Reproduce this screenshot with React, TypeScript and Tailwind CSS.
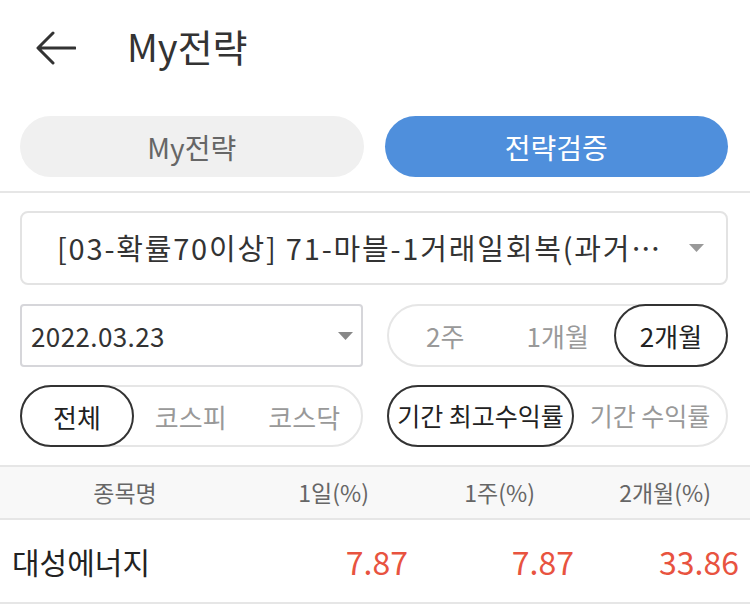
import React from "react";

const F = { fontFamily: '"Noto Sans CJK KR", "Noto Sans", sans-serif' };

function Caret({ color = "#999" }: { color?: string }) {
  return (
    <svg width="15" height="8" viewBox="0 0 15 8">
      <path d="M0 0 L15 0 L7.5 8 Z" fill={color} />
    </svg>
  );
}

export default function App() {
  return (
    <div style={F} className="w-[750px] h-[610px] bg-white overflow-hidden text-[#222]">
      {/* Header */}
      <div className="h-[96px] flex items-center">
        <div className="w-[127px] flex items-center pl-[36px]">
          <svg width="40" height="34" viewBox="0 0 40 34">
            <path d="M39 17 H3 M17 2 L2 17 L17 32" stroke="#333" strokeWidth="3" fill="none" strokeLinecap="round" strokeLinejoin="round" />
          </svg>
        </div>
        <div className="text-[38px] leading-none text-[#333] -mt-[4px]">My전략</div>
      </div>

      {/* Tabs */}
      <div className="flex gap-[21px] pl-[20px] pr-[22px] pt-[20px]">
        <div className="flex-1 h-[61px] rounded-full bg-[#f0f0f0] flex items-center justify-center text-[28px] text-[#666]">My전략</div>
        <div className="flex-1 h-[61px] rounded-full bg-[#4f8fdc] flex items-center justify-center text-[28px] text-white">전략검증</div>
      </div>

      <div className="mt-[14px] h-[2px] bg-[#e6e6e6]" />

      {/* Strategy dropdown */}
      <div className="pl-[20px] pr-[22px] pt-[18px]">
        <div className="h-[74px] border-2 border-[#e3e3e3] rounded-[8px] flex items-center pl-[35px] pr-[22px]">
          <span className="flex-1 text-[29px] tracking-[1.8px] text-[#333] whitespace-nowrap">[03-확률70이상] 71-마블-1거래일회복(과거…</span>
          <Caret />
        </div>
      </div>

      {/* Row: date + period */}
      <div className="flex gap-[24px] pl-[20px] pr-[22px] pt-[19px]">
        <div className="w-[343px] h-[63px] border-2 border-[#d6d6da] rounded-[4px] flex items-center pl-[9px] pr-[8px]">
          <span className="flex-1 text-[26px] tracking-[0.4px] text-[#333]">2022.03.23</span>
          <Caret color="#888" />
        </div>
        <div className="flex-1 h-[63px] border-2 border-[#e6e6e6] rounded-full flex items-center">
          <div className="flex-1 text-center text-[26px] text-[#999]">2주</div>
          <div className="flex-1 text-center text-[26px] text-[#999]">1개월</div>
          <div className="w-[114px] -mr-[2px] h-[63px] border-2 border-[#333] rounded-full flex items-center justify-center text-[26px] text-[#222]">2개월</div>
        </div>
      </div>

      {/* Row: market + return type */}
      <div className="flex gap-[24px] pl-[20px] pr-[22px] pt-[18px]">
        <div className="w-[343px] h-[62px] border-2 border-[#e6e6e6] rounded-full flex items-center">
          <div className="w-[114px] -ml-[2px] h-[62px] border-2 border-[#333] rounded-full flex items-center justify-center text-[26px] text-[#222]">전체</div>
          <div className="flex-1 text-center text-[26px] text-[#999]">코스피</div>
          <div className="flex-1 text-center text-[26px] text-[#999]">코스닥</div>
        </div>
        <div className="flex-1 h-[62px] border-2 border-[#e6e6e6] rounded-full flex items-center">
          <div className="w-[187px] -ml-[2px] h-[62px] border-2 border-[#333] rounded-full flex items-center justify-center text-[25px] text-[#222] whitespace-nowrap">기간 최고수익률</div>
          <div className="flex-1 text-center text-[25px] text-[#999]">기간 수익률</div>
        </div>
      </div>

      {/* Table */}
      <div className="mt-[18px] border-t-2 border-b-2 border-[#e6e6e6] bg-[#f8f8f8] h-[55px] flex items-center text-[23px] text-[#666]">
        <div className="w-[250px] text-center">종목명</div>
        <div className="w-[119px] text-right">1일(%)</div>
        <div className="w-[166px] text-right">1주(%)</div>
        <div className="w-[176px] text-right">2개월(%)</div>
      </div>
      <div className="h-[84px] border-b-2 border-[#e6e6e6] flex items-center">
        <div className="w-[250px] pl-[12px] text-[30px] text-[#222]">대성에너지</div>
        <div className="w-[158px] text-right text-[32px] text-[#e8533f]">7.87</div>
        <div className="w-[166px] text-right text-[32px] text-[#e8533f]">7.87</div>
        <div className="w-[165px] text-right text-[32px] text-[#e8533f]">33.86</div>
      </div>
    </div>
  );
}
